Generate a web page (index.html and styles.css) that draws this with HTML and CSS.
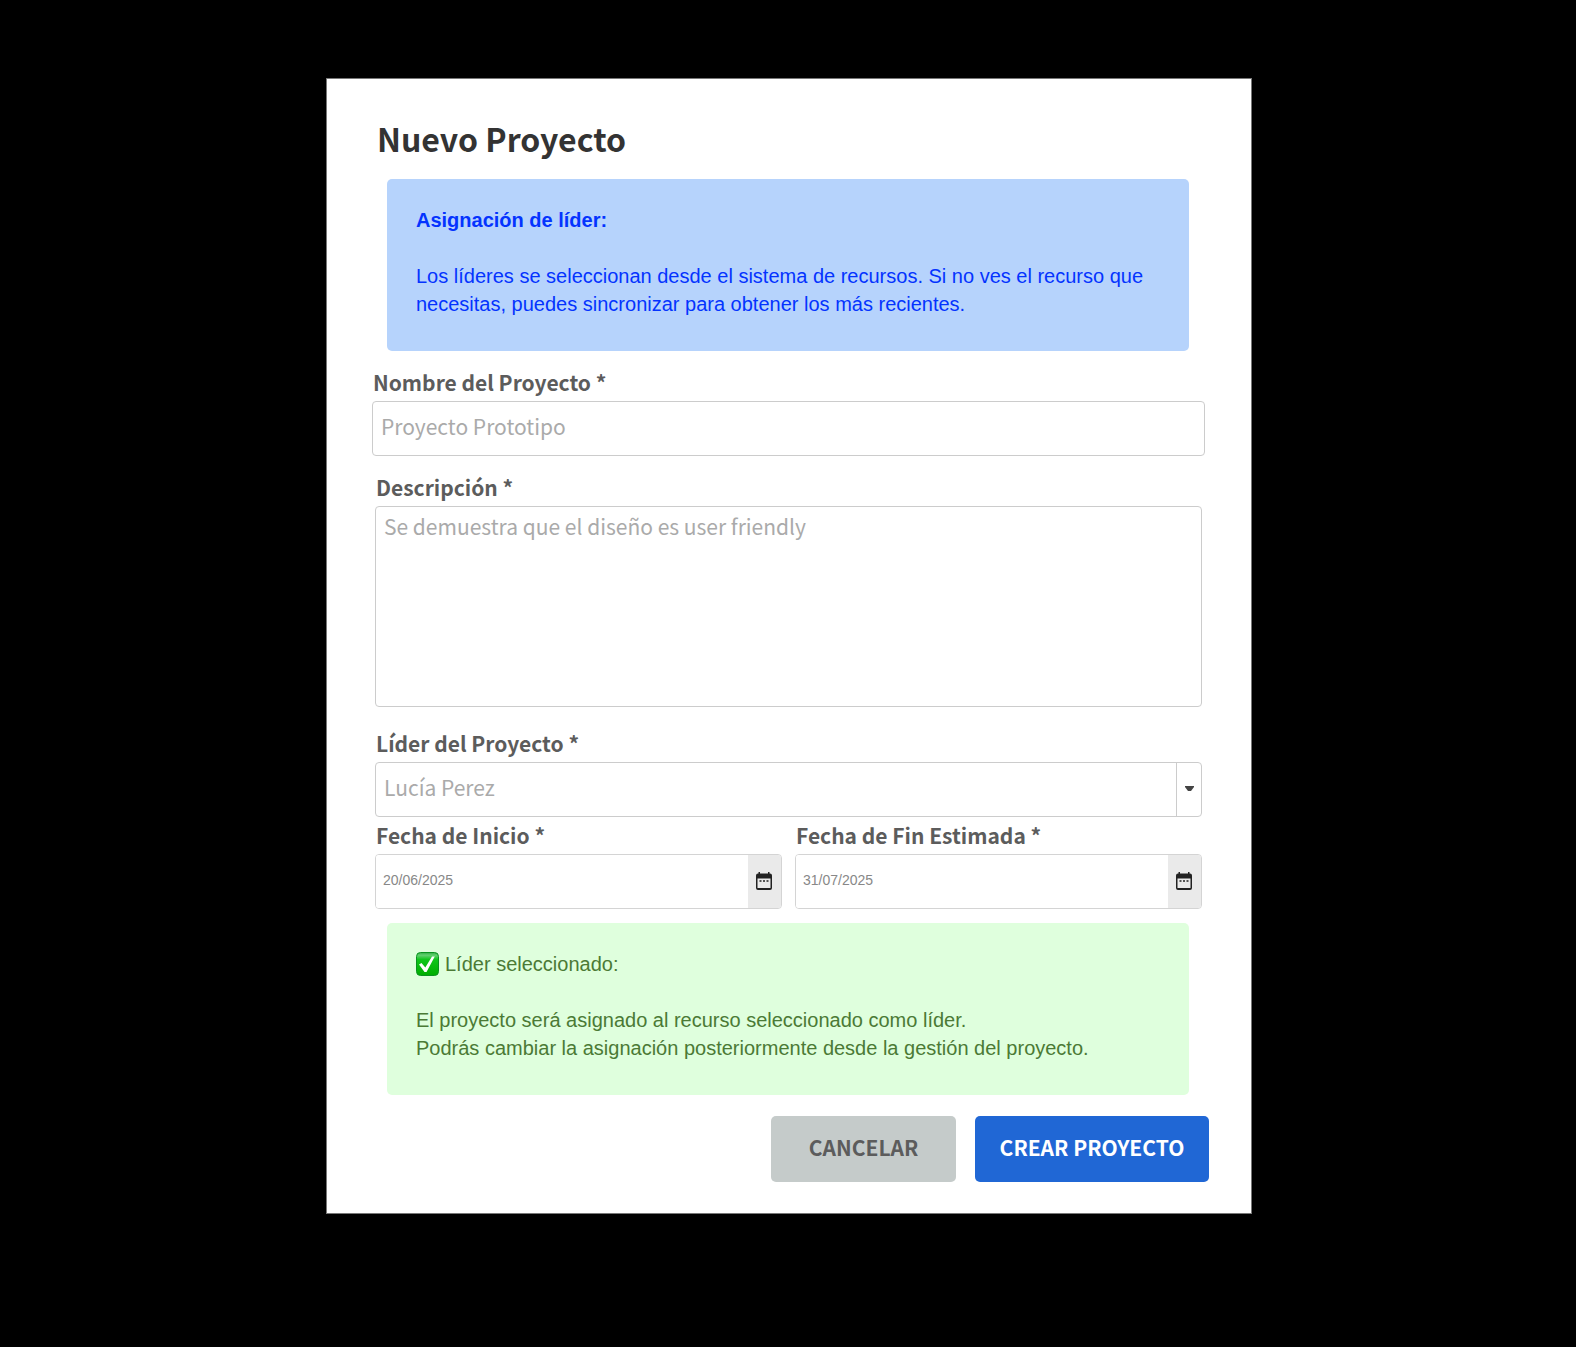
FILE: index.html
```html
<!DOCTYPE html>
<html lang="es">
<head>
<meta charset="utf-8">
<meta name="viewport" content="width=device-width, initial-scale=1">
<title>Nuevo Proyecto</title>
<link rel="stylesheet" href="styles.css">
</head>
<body>
<main class="card">
  <h1 class="title">Nuevo Proyecto</h1>

  <section class="notice notice-info">
    <h2 class="notice-title">Asignación de líder:</h2>
    <p>Los líderes se seleccionan desde el sistema de recursos. Si no ves el recurso que necesitas, puedes sincronizar para obtener los más recientes.</p>
  </section>

  <form class="form">
    <div class="field field-wide">
      <label for="nombre">Nombre del Proyecto *</label>
      <input class="control" id="nombre" type="text" placeholder="Proyecto Prototipo">
    </div>

    <div class="field">
      <label for="descripcion">Descripción *</label>
      <textarea class="control control-area" id="descripcion" placeholder="Se demuestra que el diseño es user friendly"></textarea>
    </div>

    <div class="field field-leader">
      <label for="lider">Líder del Proyecto *</label>
      <div class="picker">
        <select class="control" id="lider"><option>Lucía Perez</option></select>
        <span class="picker-arrow"><svg width="9" height="5" viewBox="0 0 9 5"><path d="M0 0h9v1L6 5H3L0 1z" fill="#444"/></svg></span>
      </div>
    </div>

    <div class="dates">
      <div class="field">
        <label for="inicio">Fecha de Inicio *</label>
        <div class="date">
          <input class="date-input" id="inicio" type="text" value="20/06/2025">
          <button class="date-button" type="button" aria-label="Elegir fecha de inicio">
            <svg width="16" height="18" viewBox="0 0 16 18"><path d="M2.500 0h1.500v1.500h8V0h1.500v1.500H14a2 2 0 0 1 2 2V16a2 2 0 0 1-2 2H2a2 2 0 0 1-2-2V3.500a2 2 0 0 1 2-2h.5zM1.500 6.500v9.500h13V6.500z" fill="#222" fill-rule="evenodd"/><path d="M3.500 8h2v2h-2zM7 8h2v2H7zM10.500 8h2v2h-2z" fill="#555"/></svg>
          </button>
        </div>
      </div>
      <div class="field">
        <label for="fin">Fecha de Fin Estimada *</label>
        <div class="date">
          <input class="date-input" id="fin" type="text" value="31/07/2025">
          <button class="date-button" type="button" aria-label="Elegir fecha de fin">
            <svg width="16" height="18" viewBox="0 0 16 18"><path d="M2.500 0h1.500v1.500h8V0h1.500v1.500H14a2 2 0 0 1 2 2V16a2 2 0 0 1-2 2H2a2 2 0 0 1-2-2V3.500a2 2 0 0 1 2-2h.5zM1.500 6.500v9.500h13V6.500z" fill="#222" fill-rule="evenodd"/><path d="M3.500 8h2v2h-2zM7 8h2v2H7zM10.500 8h2v2h-2z" fill="#555"/></svg>
          </button>
        </div>
      </div>
    </div>

    <section class="notice notice-success">
      <p class="notice-lead">
        <svg width="24" height="24" viewBox="0 0 24 24" aria-hidden="true">
          <defs><linearGradient id="g" x1="0" y1="0" x2="0" y2="1"><stop offset="0" stop-color="#2fae43"/><stop offset="0.12" stop-color="#62d070"/><stop offset="0.3" stop-color="#10c51c"/><stop offset="1" stop-color="#00ad00"/></linearGradient></defs>
          <rect x="0.5" y="0.5" width="22" height="23" rx="4" fill="url(#g)" stroke="#0a9320"/>
          <path d="M3 12.500L5.500 11L9.300 15.500L16 4.500H18.800L10.500 20H8.500z" fill="#fff"/>
        </svg>
        <span>Líder seleccionado:</span>
      </p>
      <p>El proyecto será asignado al recurso seleccionado como líder.<br>Podrás cambiar la asignación posteriormente desde la gestión del proyecto.</p>
    </section>

    <div class="actions">
      <button class="button button-cancel" type="button">CANCELAR</button>
      <button class="button button-create" type="submit">CREAR PROYECTO</button>
    </div>
  </form>
</main>
</body>
</html>
```
FILE: styles.css
```css
* {
  box-sizing: border-box;
}

body {
  margin: 0;
  padding: 78px 14px 133px 16px;
  background: #000;
  font-family: "Noto Sans CJK SC", "Noto Sans", sans-serif;
  font-size: 21px;
  line-height: 28px;
  color: #5c5c5c;
}

h1,
h2,
p {
  margin: 0;
}

.card {
  max-width: 926px;
  margin: 0 auto;
  padding: 37px 49px 31px 48px;
  background: #fff;
  border: 1px solid #777;
}

.title {
  padding-left: 2px;
  font-size: 32px;
  line-height: 44px;
  color: #333;
}

.notice {
  margin: 0 13px 0 12px;
  padding: 27px 28px 33px 29px;
  border-radius: 5px;
  font-family: "Liberation Sans", Arial, sans-serif;
  font-size: 20px;
  line-height: 28px;
}

.notice-info {
  margin-top: 19px;
  background: #b6d3fc;
  color: #0433ff;
}

.notice-title {
  margin-bottom: 28px;
  font-size: 20px;
}

.notice-success {
  margin-top: 14px;
  background: #dfffdd;
  color: #4b7a35;
}

.notice-lead {
  display: flex;
  align-items: center;
  gap: 5px;
  margin-bottom: 28px;
}

.field {
  display: flex;
  flex-direction: column;
  gap: 5px;
  margin-top: 17px;
}

.field-wide {
  margin-inline: -3px;
}

.field-leader {
  margin-top: 22px;
}

label {
  padding-left: 1px;
  font-weight: 700;
}

.control {
  width: 100%;
  height: 55px;
  margin: 0;
  padding: 0 8px 6px;
  border: 1px solid #ccc;
  border-radius: 4px;
  background: #fff;
  font: inherit;
  color: #aaa;
  appearance: none;
}

.control::placeholder {
  color: #aaa;
  opacity: 1;
}

.control-area {
  height: 201px;
  padding-top: 5px;
  resize: none;
}

.picker {
  display: grid;
}

.picker > * {
  grid-area: 1 / 1;
}

.picker-arrow {
  display: grid;
  place-items: center;
  justify-self: end;
  width: 26px;
  padding: 0 1px 2px 0;
  border-left: 1px solid #ccc;
  margin: 1px 0;
  pointer-events: none;
}

.dates {
  display: grid;
  grid-template-columns: 1fr 1fr;
  gap: 13px;
  margin-top: 4px;
}

.dates .field {
  margin-top: 0;
}

.date {
  display: flex;
  height: 55px;
  overflow: hidden;
  border: 1px solid #d4d4d4;
  border-radius: 4px;
}

.date-input {
  flex: 1;
  min-width: 0;
  padding: 0 7px 4px;
  border: 0;
  font: 14px "Liberation Sans", Arial, sans-serif;
  color: #888;
}

.date-button {
  display: grid;
  place-items: center;
  width: 33px;
  padding: 0 1px 2px 0;
  border: 0;
  background: #eaeaea;
}

.actions {
  display: flex;
  flex-wrap: wrap;
  justify-content: flex-end;
  gap: 19px;
  margin: 21px -7px 0 0;
}

.button {
  height: 66px;
  padding: 0 22px 4px;
  border: 0;
  border-radius: 5px;
  font: inherit;
  font-weight: 700;
}

.button-cancel {
  min-width: 185px;
  background: #c5cbca;
  color: #5c5c5c;
}

.button-create {
  min-width: 234px;
  background: #2067d5;
  color: #fff;
}
```
